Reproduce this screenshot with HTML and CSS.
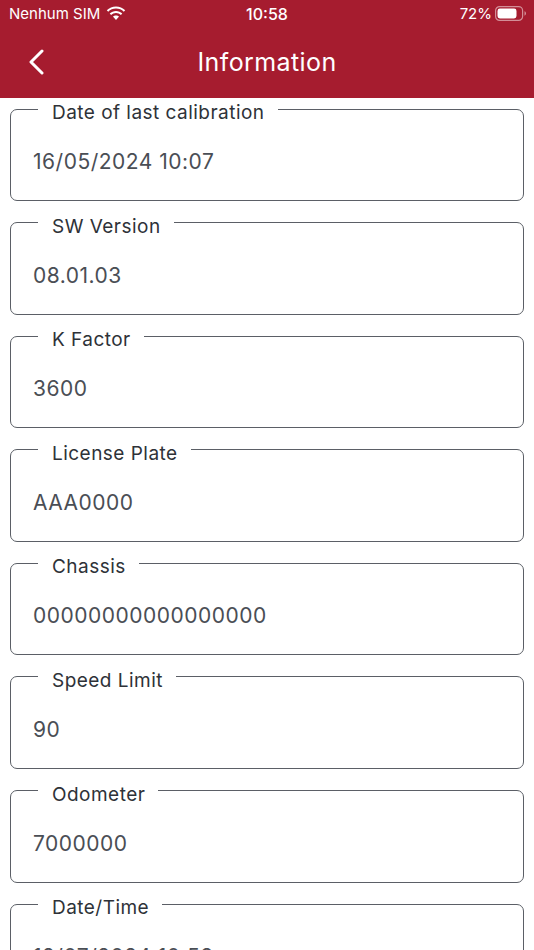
FILE: index.html
```html
<!DOCTYPE html>
<html lang="en">
<head>
    <meta charset="UTF-8">
    <meta name="viewport" content="width=device-width, initial-scale=1.0">
    <title>Information</title>
    <link rel="stylesheet" href="styles.css">
</head>
<body>
    <header class="app-header">
        <div class="status-bar">
            <div class="status-left">
                <span>Nenhum SIM</span>
                <svg class="wifi-icon" viewBox="0 0 20 15" width="20" height="15">
                    <path d="M10 2.6c3 0 5.8 1.2 7.8 3.2l1.4-1.5C16.800 1.800 13.500.4 10 .4S3.200 1.800.8 4.300l1.400 1.500c2-2 4.800-3.200 7.800-3.200z" fill="#fff"/>
                    <path d="M10 7c1.900 0 3.600.7 4.900 2l1.400-1.500C14.600 5.800 12.400 4.900 10 4.900s-4.600.9-6.300 2.600L5.100 9C6.400 7.700 8.100 7 10 7z" fill="#fff"/>
                    <path d="M10 9.400c-1.200 0-2.300.5-3.100 1.200L10 14l3.100-3.400c-.8-.7-1.900-1.200-3.100-1.200z" fill="#fff"/>
                </svg>
            </div>
            <span class="status-time">10:58</span>
            <div class="status-right">
                <span>72%</span>
                <svg class="battery-icon" viewBox="0 0 32 15" width="32" height="15">
                    <rect x="0.6" y="0.6" width="27" height="13.800" rx="4" fill="none" stroke="#fff" stroke-opacity="0.5" stroke-width="1.200"/>
                    <rect x="2.500" y="2.500" width="19" height="10" rx="2.400" fill="#fff"/>
                    <path d="M29.500 5.300c.9.3 1.500 1.200 1.500 2.200s-.6 1.900-1.500 2.200z" fill="#fff" fill-opacity="0.5"/>
                </svg>
            </div>
        </div>
        <div class="title-bar">
            <svg class="back-icon" viewBox="0 0 16 26" width="16" height="26">
                <path d="M14 2 3 13l11 11" fill="none" stroke="#fff" stroke-width="3" stroke-linecap="round" stroke-linejoin="round"/>
            </svg>
            <h1>Information</h1>
        </div>
    </header>
    <main class="container">
        <!-- Device info fields -->
        <fieldset class="info-field">
            <legend>Date of last calibration</legend>
            <p>16/05/2024 10:07</p>
        </fieldset>
        <fieldset class="info-field">
            <legend>SW Version</legend>
            <p>08.01.03</p>
        </fieldset>
        <fieldset class="info-field">
            <legend>K Factor</legend>
            <p>3600</p>
        </fieldset>
        <fieldset class="info-field">
            <legend>License Plate</legend>
            <p>AAA0000</p>
        </fieldset>
        <fieldset class="info-field">
            <legend>Chassis</legend>
            <p>00000000000000000</p>
        </fieldset>
        <fieldset class="info-field">
            <legend>Speed Limit</legend>
            <p>90</p>
        </fieldset>
        <fieldset class="info-field">
            <legend>Odometer</legend>
            <p>7000000</p>
        </fieldset>
        <fieldset class="info-field">
            <legend>Date/Time</legend>
            <p>12/07/2024 10:58</p>
        </fieldset>
    </main>
</body>
</html>
```

FILE: styles.css
```css
html, body {
    height: 100%;
}
body {
    margin: 0;
    font-family: Inter, "Liberation Sans", sans-serif;
    background-color: #fff;
    overflow: hidden;
}
.app-header {
    background-color: #a61c2f;
    color: #fff;
    height: 98px;
    display: flex;
    flex-direction: column;
}
.status-bar {
    display: grid;
    grid-template-columns: 1fr auto 1fr;
    align-items: center;
    height: 27px;
    padding: 0 9px;
    font-size: 15px;
}
.status-left {
    display: flex;
    align-items: center;
    gap: 6px;
}
.status-time {
    font-size: 16px;
    font-weight: 500;
}
.status-right {
    display: flex;
    align-items: center;
    justify-content: flex-end;
    gap: 3px;
    margin-right: -2px;
}
.title-bar {
    position: relative;
    flex: 1;
    display: flex;
    align-items: center;
    justify-content: center;
    padding-bottom: 2px;
}
.title-bar h1 {
    margin: 0;
    font-size: 25px;
    font-weight: 400;
    letter-spacing: 0.4px;
}
.back-icon {
    position: absolute;
    left: 28px;
    top: 22px;
}
.container {
    padding: 0 10px;
}
.info-field {
    margin: 0 0 10.600px;
    padding: 0 22px;
    height: 103px;
    box-sizing: border-box;
    border: 1.500px solid #5b5f66;
    border-radius: 7px;
}
.info-field legend {
    margin-left: 5px;
    padding: 7px 13px 0 14px;
    font-size: 19px;
    line-height: 15px;
    letter-spacing: 0.47px;
    color: #2e3238;
}
.info-field p {
    margin: 0;
    padding-top: 29px;
    font-size: 21px;
    line-height: 26px;
    letter-spacing: 0.5px;
    color: #4a4e55;
}
```
